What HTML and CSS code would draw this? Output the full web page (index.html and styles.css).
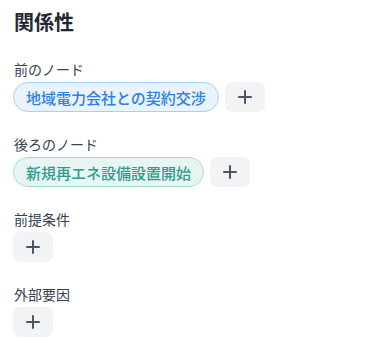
FILE: index.html
```html
<!DOCTYPE html>
<html lang="ja">
<head>
<meta charset="utf-8">
<link rel="stylesheet" href="styles.css">
</head>
<body>
<div class="panel">
  <h2 class="title">関係性</h2>
  <div class="section">
    <div class="label">前のノード</div>
    <div class="row">
      <span class="chip chip-blue">地域電力会社との契約交渉</span>
      <button class="add" type="button"><svg width="14" height="14" viewBox="0 0 14 14"><path d="M7 1v12M1 7h12" stroke="#4b5563" stroke-width="2" stroke-linecap="round"/></svg></button>
    </div>
  </div>
  <div class="section">
    <div class="label">後ろのノード</div>
    <div class="row">
      <span class="chip chip-teal">新規再エネ設備設置開始</span>
      <button class="add" type="button"><svg width="14" height="14" viewBox="0 0 14 14"><path d="M7 1v12M1 7h12" stroke="#4b5563" stroke-width="2" stroke-linecap="round"/></svg></button>
    </div>
  </div>
  <div class="section">
    <div class="label">前提条件</div>
    <div class="row">
      <button class="add" type="button"><svg width="14" height="14" viewBox="0 0 14 14"><path d="M7 1v12M1 7h12" stroke="#4b5563" stroke-width="2" stroke-linecap="round"/></svg></button>
    </div>
  </div>
  <div class="section">
    <div class="label">外部要因</div>
    <div class="row">
      <button class="add" type="button"><svg width="14" height="14" viewBox="0 0 14 14"><path d="M7 1v12M1 7h12" stroke="#4b5563" stroke-width="2" stroke-linecap="round"/></svg></button>
    </div>
  </div>
</div>
</body>
</html>
```
FILE: styles.css
```css
html, body {
  margin: 0;
  padding: 0;
  background: #ffffff;
}
body {
  font-family: "Noto Sans CJK JP", "Noto Sans", sans-serif;
  color: #1f2937;
}
.panel {
  padding: 8px 13px;
}
.title {
  margin: 0 0 0 1px;
  font-size: 20px;
  line-height: 28px;
  font-weight: 700;
  color: #1f2937;
}
.section {
  margin-top: 23px;
}
.section + .section {
  margin-top: 22px;
}
.label {
  margin-left: 1px;
  font-size: 14px;
  line-height: 20px;
  color: #374151;
}
.row {
  margin-top: 3px;
  display: flex;
  align-items: center;
  gap: 6px;
}
.chip {
  box-sizing: border-box;
  height: 30px;
  display: inline-flex;
  align-items: center;
  padding: 0 12px;
  border-radius: 15px;
  font-size: 15px;
  font-weight: 500;
  border: 1px solid;
}
.chip-blue {
  color: #2f7fe3;
  background: #e9f3fe;
  border-color: #a9cff5;
}
.chip-teal {
  color: #2e9c8e;
  background: #e8f6f3;
  border-color: #a6dbd2;
}
.add {
  box-sizing: border-box;
  width: 40px;
  height: 30px;
  border: none;
  border-radius: 7px;
  background: #f2f3f5;
  display: inline-flex;
  align-items: center;
  justify-content: center;
  padding: 0;
}
.add svg {
  display: block;
}
```
